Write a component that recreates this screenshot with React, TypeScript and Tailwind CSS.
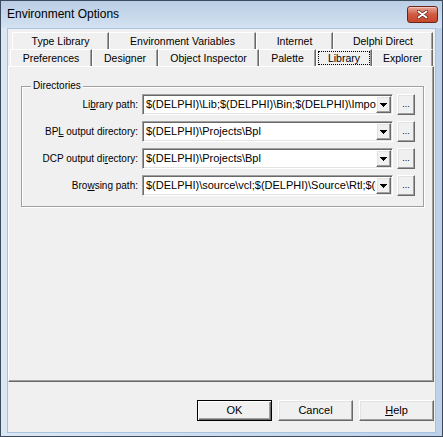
import React from "react";

const backRow = [
  { label: "Type Library", w: "w-[97px]" },
  { label: "Environment Variables", w: "w-[147px]" },
  { label: "Internet", w: "w-[77px]" },
  { label: "Delphi Direct", w: "w-[100px]" },
];

const frontRow = [
  { label: "Preferences", w: "w-[82px]" },
  { label: "Designer", w: "w-[66px]" },
  { label: "Object Inspector", w: "w-[101px]" },
  { label: "Palette", w: "w-[57px]" },
  { label: "Library", w: "w-[56px]", active: true },
  { label: "Explorer", w: "w-[61px]" },
];

const dirs = [
  { pre: "Li", key: "b", post: "rary path:", value: "$(DELPHI)\\Lib;$(DELPHI)\\Bin;$(DELPHI)\\Imports;$(DELPHI)\\Projects\\Bpl" },
  { pre: "BP", key: "L", post: " output directory:", value: "$(DELPHI)\\Projects\\Bpl" },
  { pre: "DCP output di", key: "r", post: "ectory:", value: "$(DELPHI)\\Projects\\Bpl" },
  { pre: "Bro", key: "w", post: "sing path:", value: "$(DELPHI)\\source\\vcl;$(DELPHI)\\Source\\Rtl;$(DELPHI)\\Source\\Internet" },
];

const raised =
  "bg-[#f0f0f0] border border-t-white border-l-white border-r-[#696969] border-b-[#696969] shadow-[inset_-1px_-1px_0_#a0a0a0,inset_1px_1px_0_#e3e3e3]";

function Tab({ label, w, active }: { label: string; w: string; active?: boolean }) {
  return (
    <div
      className={`${w} h-[17px] flex items-center justify-center border-l border-t border-l-white border-t-white border-r border-r-[#696969] shadow-[inset_-1px_0_0_#a0a0a0]`}
    >
      {active ? (
        <div className="self-stretch flex-1 mx-[1px] my-[1px] flex items-center justify-center border border-dotted border-black">
          {label}
        </div>
      ) : (
        label
      )}
    </div>
  );
}

function DownArrow() {
  return (
    <svg width="7" height="4" viewBox="0 0 7 4" shapeRendering="crispEdges">
      <rect x="0" y="0" width="7" height="1" fill="#000" />
      <rect x="1" y="1" width="5" height="1" fill="#000" />
      <rect x="2" y="2" width="3" height="1" fill="#000" />
      <rect x="3" y="3" width="1" height="1" fill="#000" />
    </svg>
  );
}

function Combo({ value }: { value: string }) {
  return (
    <div className="ml-[4px] w-[251px] h-[21px] flex items-center bg-white border border-t-[#a0a0a0] border-l-[#a0a0a0] border-r-white border-b-white shadow-[inset_1px_1px_0_#696969,inset_-1px_-1px_0_#e3e3e3] pl-[3px] pr-[1px]">
      <div className="flex-1 overflow-hidden whitespace-nowrap text-[11px] leading-none">{value}</div>
      <div className={`w-[15px] h-[17px] shrink-0 flex items-center justify-center ${raised}`}>
        <DownArrow />
      </div>
    </div>
  );
}

export default function App() {
  return (
    <div className="w-[443px] h-[437px] flex flex-col border border-[#3c4b5e] bg-gradient-to-r from-[#dce7f4] to-[#bdd1e8] font-['Liberation_Sans',Arial,sans-serif] text-black">
      {/* Title bar */}
      <div className="h-[27px] flex items-start pl-[6px] pr-[4px] bg-gradient-to-b from-[#b9cde5] to-[#d4e2f1]">
        <span className="mt-[6px] text-[12px] leading-[14px]">Environment Options</span>
        <div className="ml-auto mt-[5px] w-[31px] h-[17px] rounded-[3px] border border-[#6b2518] bg-gradient-to-b from-[#e6a797] via-[#cf5a41] to-[#c8462c] flex items-center justify-center shadow-[inset_0_1px_0_#f3c7bc]">
          <svg width="11" height="9" viewBox="0 0 11 9">
            <path d="M1.5 1.5l8 6M9.5 1.5l-8 6" stroke="#5a1d12" strokeWidth="3.4" strokeLinecap="round" />
            <path d="M1.5 1.5l8 6M9.5 1.5l-8 6" stroke="#fff" strokeWidth="2" strokeLinecap="round" />
          </svg>
        </div>
      </div>

      {/* Client */}
      <div className="ml-[6px] mr-[6px] mb-[3px] flex-1 flex flex-col bg-[#f0f0f0] border border-[#a8c3e0]">
        {/* Tabs */}
        <div className="mt-[3px] text-[10.5px] leading-none">
          <div className="flex ml-[4px]">
            {backRow.map((t) => (
              <Tab key={t.label} {...t} />
            ))}
          </div>
          <div className="flex ml-[2px]">
            {frontRow.map((t) => (
              <Tab key={t.label} {...t} />
            ))}
          </div>
        </div>

        {/* Page */}
        <div className="w-[426px] h-[316px] border border-t-white border-l-white border-r-[#696969] border-b-[#696969] shadow-[inset_-1px_-1px_0_#a0a0a0]">
          <div className="relative mt-[19px] ml-[12px] w-[403px] border border-[#a0a0a0] shadow-[inset_1px_1px_0_#fff,1px_1px_0_#fff] pt-[7px] pb-[10px]">
            <span className="absolute -top-[7px] left-[9px] px-[2px] bg-[#f0f0f0] text-[10px] leading-[12px]">
              Directories
            </span>
            <div className="flex flex-col gap-[6px]">
              {dirs.map((d) => (
                <div key={d.value + d.pre} className="flex items-center">
                  <div className="w-[116px] text-right text-[10px] whitespace-nowrap">
                    {d.pre}
                    <u>{d.key}</u>
                    {d.post}
                  </div>
                  <Combo value={d.value} />
                  <div className={`ml-[4px] w-[18px] h-[21px] flex items-end justify-center pb-[5px] text-[9px] leading-none ${raised}`}>
                    ...
                  </div>
                </div>
              ))}
            </div>
          </div>
        </div>

        {/* Buttons */}
        <div className="mt-[18px] flex justify-end gap-[6px] pr-[1px] text-[11px]">
          <button className="w-[75px] h-[21px] bg-[#f0f0f0] border border-black shadow-[inset_1px_1px_0_#fff,inset_-1px_-1px_0_#696969,inset_-2px_-2px_0_#a0a0a0]">
            OK
          </button>
          <button className={`w-[75px] h-[21px] ${raised}`}>Cancel</button>
          <button className={`w-[75px] h-[21px] ${raised}`}>
            <u>H</u>elp
          </button>
        </div>
      </div>
    </div>
  );
}
